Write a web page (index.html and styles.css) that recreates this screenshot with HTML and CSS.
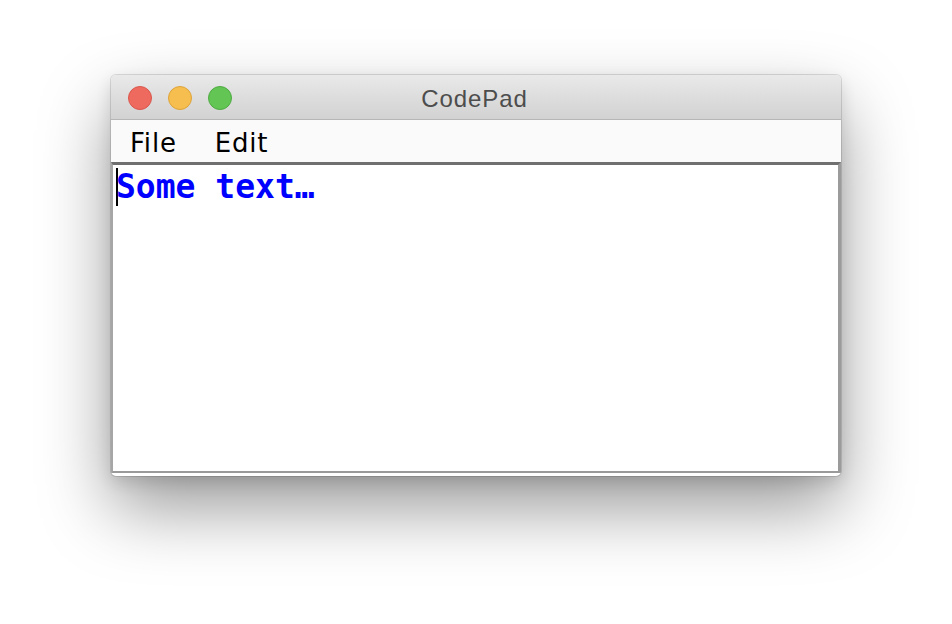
FILE: index.html
```html
<!DOCTYPE html>
<html lang="en">
<head>
  <meta charset="UTF-8" />
  <title>CodePad</title>
  <link rel="stylesheet" href="styles.css">
</head>
<body>
  <div class="window">
    <div class="titlebar">
      <div class="lights">
        <span class="light close"></span>
        <span class="light minimize"></span>
        <span class="light zoom"></span>
      </div>
      <div class="title">CodePad</div>
      <div></div>
    </div>

    <div class="menubar">
      <span class="menu-item">File</span>
      <span class="menu-item">Edit</span>
    </div>

    <div class="editor">
      <span class="caret"></span><span class="code">Some text…</span>
    </div>
  </div>
</body>
</html>
```

FILE: styles.css
```css
* {
  margin: 0;
  padding: 0;
  box-sizing: border-box;
}

body {
  background: #ffffff;
  min-height: 100vh;
  padding: 75px 0 0 111px;
}

.window {
  width: 730px;
  height: 401px;
  display: flex;
  flex-direction: column;
  background: #ffffff;
  border-radius: 5px;
  overflow: hidden;
  padding-bottom: 3px;
  box-shadow: 0 0 0 1px rgba(0, 0, 0, 0.12), 0 32px 70px rgba(0, 0, 0, 0.4), 0 6px 16px rgba(0, 0, 0, 0.12);
}

/* title bar */
.titlebar {
  height: 45px;
  display: grid;
  grid-template-columns: 1fr auto 1fr;
  background: linear-gradient(#e9e9e9, #d2d2d2);
  border-bottom: 1px solid #b6b6b6;
}

.lights {
  display: flex;
  gap: 16px;
  padding-left: 17px;
  margin-top: 11px;
}

.light {
  width: 24px;
  height: 24px;
  border-radius: 50%;
}

.close {
  background: #ee6a5f;
  border: 1px solid #d9574d;
}

.minimize {
  background: #f6be4f;
  border: 1px solid #dea33a;
}

.zoom {
  background: #62c554;
  border: 1px solid #50ab43;
}

.title {
  font-family: "Liberation Sans", Arial, sans-serif;
  font-size: 24px;
  letter-spacing: 0.9px;
  color: #4d4d4d;
  padding: 5px 3px 0 0;
  line-height: 38px;
}

/* menu bar */
.menubar {
  height: 42px;
  display: flex;
  gap: 38px;
  padding: 4px 0 0 19px;
  background: #fafafa;
  font-family: "DejaVu Sans", Verdana, sans-serif;
  font-size: 26px;
  letter-spacing: 0.8px;
  line-height: 38px;
  color: #000000;
}

/* text area */
.editor {
  flex: 1;
  border-top: 3px solid #6f6f6f;
  border-left: 2px solid #a6a6a6;
  border-right: 3px solid #9b9b9b;
  border-bottom: 2px solid #9a9a9a;
  padding: 3px 0 0 3px;
  font-family: "DejaVu Sans Mono", Menlo, monospace;
  font-size: 33px;
  font-weight: bold;
  line-height: 38px;
  color: #0000ff;
}

.caret {
  display: inline-block;
  width: 0;
  height: 38px;
  border-left: 2px solid #000000;
  margin-right: -2px;
  vertical-align: top;
}
```
